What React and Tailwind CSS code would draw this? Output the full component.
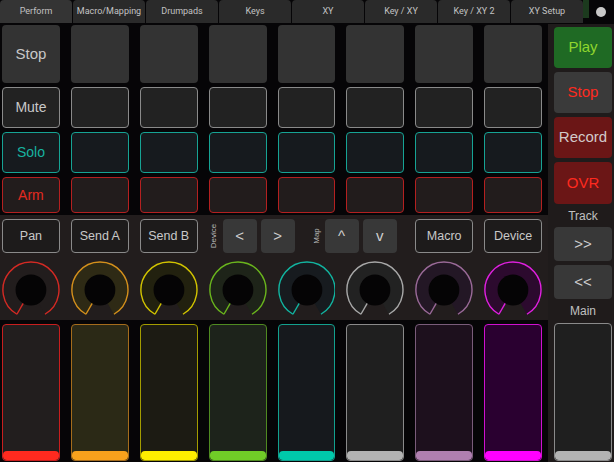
import React from "react";

const tabs = ["Perform", "Macro/Mapping", "Drumpads", "Keys", "XY", "Key / XY", "Key / XY 2", "XY Setup"];

const channels = [
  { stroke: "#d42a24", tint: "#221d1d", border: "#c81e1e", bg: "#221e1e", bar: "#ff2a1f" },
  { stroke: "#d4901c", tint: "#2e2a15", border: "#a56c1c", bg: "#2b2916", bar: "#f7a11c" },
  { stroke: "#d2c400", tint: "#22210f", border: "#a39c00", bg: "#1c1b13", bar: "#ffee00" },
  { stroke: "#6ab51d", tint: "#1e2419", border: "#4f8a21", bg: "#1d231b", bar: "#70cc27" },
  { stroke: "#12b4a0", tint: "#171b1f", border: "#12a08e", bg: "#16191d", bar: "#00c9aa" },
  { stroke: "#a8a8a8", tint: "#222222", border: "#8a8a8a", bg: "#1f1f1f", bar: "#b3b3b3" },
  { stroke: "#9a6a98", tint: "#231725", border: "#7a5c7a", bg: "#1d101d", bar: "#b07fb0" },
  { stroke: "#e020e0", tint: "#2c0a2e", border: "#d010d0", bg: "#2a0030", bar: "#ff00ff" },
];

function pt(cx, cy, r, deg) {
  const a = (deg * Math.PI) / 180;
  return [cx + r * Math.sin(a), cy - r * Math.cos(a)];
}

function Knob({ stroke, tint }) {
  const c = 31;
  const r = 30;
  const [sx, sy] = pt(c, c, r, 210);
  const [ex, ey] = pt(c, c, r, 150);
  const [ix, iy] = pt(c, c, 16, 210);
  return (
    <svg width="62" height="62" viewBox="0 0 62 62">
      <path d={`M${c} ${c} L${sx} ${sy} A${r} ${r} 0 1 1 ${ex} ${ey} Z`} fill={tint} />
      <path d={`M${sx} ${sy} A${r} ${r} 0 1 1 ${ex} ${ey}`} fill="none" stroke={stroke} strokeWidth="1.5" />
      <line x1={ix} y1={iy} x2={sx} y2={sy} stroke={stroke} strokeWidth="1.5" />
      <circle cx={c} cy={c} r="16.5" fill="#050405" />
    </svg>
  );
}

function SmallBtn({ children }) {
  return (
    <div className="w-[34px] h-[34px] rounded-[4px] bg-[#383838] flex items-center justify-center text-[15px] text-[#cfcfcf]">
      {children}
    </div>
  );
}

export default function App() {
  return (
    <div className="w-[614px] h-[462px] overflow-hidden bg-[#060507] flex flex-col font-['Liberation_Sans',Arial,sans-serif]">
      {/* Tabs */}
      <div className="h-[24px] flex items-start">
        <div className="flex gap-[1px]">
          {tabs.map((t, i) => (
            <div
              key={t}
              className={`w-[72px] h-[23px] rounded-t-[4px] flex items-center justify-center text-[9px] text-[#c2c2c2] font-['Roboto',sans-serif] ${
                i === 0 ? "bg-[#343434]" : "bg-[#2a2a2a]"
              }`}
            >
              {t}
            </div>
          ))}
        </div>
        <div className="flex-1 flex items-start">
          <div className="w-[6px] h-[18px] bg-[#1c3a1e]" />
          <div className="ml-[7px] mt-[7px] w-[10px] h-[10px] rounded-full bg-[#c8c8c8]" />
        </div>
      </div>

      <div className="flex flex-1">
        {/* Left main */}
        <div className="w-[548px] flex flex-col">
          {/* Pad grid */}
          <div className="grid grid-cols-8 gap-x-[11px] gap-y-[4px] pl-[2px] pr-[6px] pt-[1px] pb-[2px] grid-rows-[58px_41px_41px_36px]">
            {Array.from({ length: 8 }).map((_, i) => (
              <div key={"s" + i} className="rounded-[4px] bg-[#333333] flex items-center justify-center text-[15px] text-[#c8c8c8]">
                {i === 0 ? "Stop" : ""}
              </div>
            ))}
            {Array.from({ length: 8 }).map((_, i) => (
              <div key={"m" + i} className="rounded-[4px] border border-[#8a8a8a] bg-[#222222] flex items-center justify-center text-[14px] text-[#c8c8c8]">
                {i === 0 ? "Mute" : ""}
              </div>
            ))}
            {Array.from({ length: 8 }).map((_, i) => (
              <div key={"so" + i} className="rounded-[4px] border border-[#16a394] bg-[#161a1e] flex items-center justify-center text-[14px] text-[#17b3a0]">
                {i === 0 ? "Solo" : ""}
              </div>
            ))}
            {Array.from({ length: 8 }).map((_, i) => (
              <div key={"a" + i} className="rounded-[4px] border border-[#b42020] bg-[#221c1c] flex items-center justify-center text-[14px] text-[#e32a20]">
                {i === 0 ? "Arm" : ""}
              </div>
            ))}
          </div>

          {/* Controls */}
          <div className="bg-[#221d1d] pt-[4px] pb-[1px] pl-[2px] pr-[6px] flex flex-col gap-[6px]">
            <div className="grid grid-cols-8 gap-x-[11px] h-[34px]">
              {["Pan", "Send A", "Send B"].map((t) => (
                <div key={t} className="rounded-[4px] border border-[#8a8a8a] bg-[#1d1b1b] flex items-center justify-center text-[12.5px] text-[#c8c8c8]">
                  {t}
                </div>
              ))}
              <div className="col-span-3 flex items-center">
                <div className="w-[12px] flex items-center justify-center">
                  <span className="-rotate-90 text-[8px] text-[#b8b8b8] whitespace-nowrap">Device</span>
                </div>
                <div className="ml-[2px] flex gap-[4px]">
                  <SmallBtn>&lt;</SmallBtn>
                  <SmallBtn>&gt;</SmallBtn>
                </div>
                <div className="ml-[16px] w-[12px] flex items-center justify-center">
                  <span className="-rotate-90 text-[8px] text-[#b8b8b8] whitespace-nowrap">Map</span>
                </div>
                <div className="ml-[2px] flex gap-[4px]">
                  <SmallBtn>^</SmallBtn>
                  <SmallBtn>v</SmallBtn>
                </div>
              </div>
              {["Macro", "Device"].map((t) => (
                <div key={t} className="rounded-[4px] border border-[#8a8a8a] bg-[#1d1b1b] flex items-center justify-center text-[12.5px] text-[#c8c8c8]">
                  {t}
                </div>
              ))}
            </div>
            <div className="grid grid-cols-8 gap-x-[11px] h-[60px]">
              {channels.map((c, i) => (
                <div key={i} className="flex items-center justify-center">
                  <Knob stroke={c.stroke} tint={c.tint} />
                </div>
              ))}
            </div>
          </div>

          {/* Faders */}
          <div className="flex-1 grid grid-cols-8 gap-x-[11px] pl-[2px] pr-[6px] pt-[4px] pb-[1px]">
            {channels.map((c, i) => (
              <div
                key={i}
                className="rounded-[4px] border flex flex-col justify-end overflow-hidden"
                style={{ borderColor: c.border, backgroundColor: c.bg }}
              >
                <div className="h-[9px] rounded-[4px]" style={{ backgroundColor: c.bar }} />
              </div>
            ))}
          </div>
        </div>

        {/* Right panel */}
        <div className="flex-1 bg-[#1f1b1b] pl-[6px] pr-[2px] pt-[3px] pb-[1px] flex flex-col">
          <div className="h-[41px] rounded-[4px] bg-[#1f6a24] flex items-center justify-center text-[15px] text-[#8fd62e]">Play</div>
          <div className="mt-[4px] h-[41px] rounded-[4px] bg-[#3a3a3a] flex items-center justify-center text-[15px] text-[#ff2a1f]">Stop</div>
          <div className="mt-[4px] h-[41px] rounded-[4px] bg-[#6b1616] flex items-center justify-center text-[15px] text-[#d2caca]">Record</div>
          <div className="mt-[4px] h-[42px] rounded-[4px] bg-[#6b1616] flex items-center justify-center text-[15px] text-[#ff2a1f]">OVR</div>
          <div className="h-[23px] flex items-center justify-center text-[12px] text-[#c0c0c0]">Track</div>
          <div className="h-[34px] rounded-[4px] bg-[#383838] flex items-center justify-center text-[15px] text-[#cfcfcf]">&gt;&gt;</div>
          <div className="mt-[4px] h-[34px] rounded-[4px] bg-[#383838] flex items-center justify-center text-[15px] text-[#cfcfcf]">&lt;&lt;</div>
          <div className="h-[24px] flex items-center justify-center text-[12px] text-[#c0c0c0]">Main</div>
          <div className="flex-1 rounded-[4px] border border-[#8a8a8a] bg-[#1f1f1f] flex flex-col justify-end overflow-hidden">
            <div className="h-[9px] rounded-[4px] bg-[#b3b3b3]" />
          </div>
        </div>
      </div>
    </div>
  );
}
